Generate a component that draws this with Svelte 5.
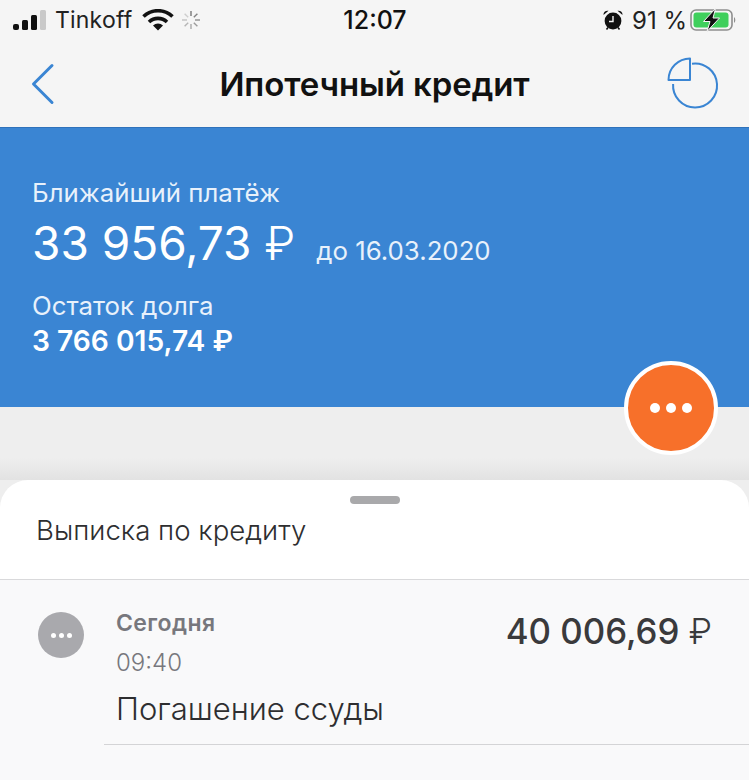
<script>
	const rays = [0, 45, 90, 135, 180, 225, 270, 315];
</script>

<div class="screen">
	<header class="top">
		<div class="status">
			<div class="status-left">
				<svg class="signal" width="34" height="21" viewBox="0 0 34 21">
					<rect x="0" y="14" width="6" height="6" rx="2" fill="#111" />
					<rect x="9" y="10" width="6" height="10" rx="1.5" fill="#111" />
					<rect x="18" y="5" width="6" height="15" rx="1.5" fill="#111" />
					<rect x="27" y="0" width="6" height="20" rx="1.5" fill="#c9c9c9" />
				</svg>
				<span class="carrier">Tinkoff</span>
				<svg class="wifi" width="32" height="22" viewBox="0 0 32 22">
					<path d="M1.5 7.5 A21 21 0 0 1 30.5 7.5" fill="none" stroke="#111" stroke-width="3.6" />
					<path d="M7 13 A13 13 0 0 1 25 13" fill="none" stroke="#111" stroke-width="3.6" />
					<path d="M11 16.4 A7.5 7.5 0 0 1 21 16.4 L16 21.5 Z" fill="#111" />
				</svg>
				<svg class="spinner" width="20" height="20" viewBox="0 0 20 20">
					{#each rays as r, i}
						<line x1="10" y1="1" x2="10" y2="6" stroke="#777" stroke-width="1.4" opacity={1 - i * 0.1} transform="rotate({r} 10 10)" />
					{/each}
				</svg>
			</div>
			<div class="time">12:07</div>
			<div class="status-right">
				<svg class="alarm" width="22" height="22" viewBox="0 0 22 22">
					<circle cx="11" cy="12" r="8.4" fill="#111" />
					<path d="M11 7 V12.5 H7" fill="none" stroke="#f5f5f5" stroke-width="1.4" />
					<path d="M1.5 6 A4 4 0 0 1 6.5 1.8 Z M20.5 6 A4 4 0 0 0 15.5 1.8 Z" fill="#111" />
					<path d="M4.5 20.5 L6 18.5 M17.5 20.5 L16 18.5" stroke="#111" stroke-width="1.6" />
				</svg>
				<span class="percent">91 %</span>
				<svg class="battery" width="49" height="24" viewBox="0 0 49 24">
					<rect x="3" y="2" width="41" height="20" rx="5" fill="none" stroke="#8e8e8e" stroke-width="1.6" />
					<rect x="5.5" y="4.5" width="35" height="15" rx="3" fill="#3fcf5c" />
					<path d="M46 9 A4 4 0 0 1 46 15 Z" fill="#8e8e8e" />
					<path d="M27.5 0.5 L15.5 13.5 H22 L19 23.5 L31.5 10 H25 Z" fill="#111" stroke="#f5f5f5" stroke-width="1" />
				</svg>
			</div>
		</div>
		<nav class="nav">
			<svg class="back" width="26" height="42" viewBox="0 0 26 42">
				<path d="M22 2.5 L3.5 21 L22 39.5" fill="none" stroke="#3a85d3" stroke-width="3" stroke-linecap="round" stroke-linejoin="round" />
			</svg>
			<h1>Ипотечный кредит</h1>
			<svg class="chart" width="52" height="52" viewBox="0 0 52 52">
				<path d="M25 6.7 A22 22 0 1 1 6.1 27" fill="none" stroke="#3a85d3" stroke-width="2" />
				<path d="M23 1.5 V23 H1.5 A21.5 21.5 0 0 1 23 1.5 Z" fill="none" stroke="#3a85d3" stroke-width="2" stroke-linejoin="round" />
			</svg>
		</nav>
	</header>

	<section class="hero">
		<div class="label">Ближайший платёж</div>
		<div class="payment">
			<span class="amount">33 956,73 <span class="rub">₽</span></span>
			<span class="due">до 16.03.2020</span>
		</div>
		<div class="label debt-label">Остаток долга</div>
		<div class="debt">3 766 015,74 ₽</div>
		<button class="fab" aria-label="Ещё">
			<i></i><i></i><i></i>
		</button>
	</section>

	<div class="gap"></div>

	<section class="sheet">
		<div class="handle"></div>
		<h2>Выписка по кредиту</h2>
		<div class="row">
			<div class="row-icon"><i></i><i></i><i></i></div>
			<div class="row-body">
				<div class="row-main">
					<div>
						<div class="date">Сегодня</div>
						<div class="clock">09:40</div>
					</div>
					<div class="sum">40 006,69 <span class="rub">₽</span></div>
				</div>
				<div class="title">Погашение ссуды</div>
			</div>
		</div>
	</section>
</div>

<style>
	:global(body) {
		margin: 0;
		background: #f9f9fa;
	}

	.screen {
		width: 749px;
		height: 780px;
		overflow: hidden;
		display: flex;
		flex-direction: column;
		font-family: Inter, "Liberation Sans", sans-serif;
		background: #eeeeee;
	}

	.top {
		height: 127px;
		flex: none;
		background: #f5f5f5;
	}

	.status {
		height: 40px;
		padding: 0 12px 0 13px;
		display: grid;
		grid-template-columns: 1fr auto 1fr;
		align-items: center;
		color: #111;
	}

	.status-left {
		display: flex;
		align-items: center;
	}

	.signal {
		margin-right: 8px;
	}

	.carrier {
		font-size: 23px;
		letter-spacing: 0.2px;
		color: #222;
	}

	.wifi {
		margin-left: 10px;
	}

	.spinner {
		margin-left: 7px;
	}

	.time {
		font-size: 25px;
		font-weight: 500;
	}

	.status-right {
		display: flex;
		align-items: center;
		justify-content: flex-end;
	}

	.percent {
		font-size: 24px;
		margin: 0 1px 0 8px;
		color: #222;
	}

	.nav {
		height: 87px;
		padding: 0 30px;
		display: grid;
		grid-template-columns: 1fr auto 1fr;
		align-items: center;
	}

	.nav h1 {
		margin: 0;
		font-size: 33px;
		font-weight: 600;
		color: #111;
		letter-spacing: -0.1px;
	}

	.back {
		margin-top: 1px;
	}

	.chart {
		margin-top: -2px;
		justify-self: end;
	}

	.hero {
		position: relative;
		height: 280px;
		flex: none;
		box-sizing: border-box;
		padding: 50px 32px 0 32px;
		background: #3a85d3;
		border-top: 1px solid #2f72bb;
		color: #fff;
	}

	.label {
		font-size: 25.8px;
		line-height: 30px;
		color: #e8f1fb;
	}

	.payment {
		display: flex;
		align-items: baseline;
		margin-top: 7px;
	}

	.amount {
		font-size: 46px;
		line-height: 56px;
	}

	.rub {
		font-weight: 300;
	}

	.due {
		margin-left: 21px;
		font-size: 25.8px;
		color: #e8f1fb;
	}

	.debt-label {
		margin-top: 20px;
	}

	.debt {
		margin-top: 2px;
		font-size: 28.2px;
		line-height: 36px;
		font-weight: 600;
	}

	.fab {
		position: absolute;
		right: 31px;
		top: 233px;
		width: 94px;
		height: 94px;
		padding: 0;
		box-sizing: border-box;
		border: 4px solid #fff;
		border-radius: 50%;
		background: #f7702a;
		display: flex;
		align-items: center;
		justify-content: center;
		gap: 6px;
	}

	.fab i {
		width: 10px;
		height: 10px;
		border-radius: 50%;
		background: #fff;
	}

	.gap {
		height: 73px;
		flex: none;
		background: linear-gradient(#eeeeee 70%, #e2e2e2);
	}

	.sheet {
		flex: 1;
		position: relative;
		background: #fff;
		border-radius: 28px 28px 0 0;
	}

	.handle {
		position: absolute;
		top: 16px;
		left: 350px;
		width: 50px;
		height: 8px;
		border-radius: 4px;
		background: #a9a9ab;
	}

	.sheet h2 {
		margin: 0;
		height: 100px;
		box-sizing: border-box;
		padding: 33px 0 0 36px;
		font-size: 27.6px;
		line-height: 34px;
		font-weight: 300;
		color: #2e2e30;
		border-bottom: 1px solid #d9d9db;
	}

	.row {
		display: flex;
		height: 201px;
		background: #f9f9fa;
		padding-left: 38px;
	}

	.row-icon {
		margin-top: 32px;
		width: 46px;
		height: 46px;
		flex: none;
		border-radius: 50%;
		background: #a9a9ad;
		display: flex;
		align-items: center;
		justify-content: center;
		gap: 3px;
	}

	.row-icon i {
		width: 5px;
		height: 5px;
		border-radius: 50%;
		background: #fff;
	}

	.row-body {
		flex: 1;
		margin-left: 20px;
		height: 165px;
		box-sizing: border-box;
		padding: 29px 37px 0 12px;
		border-bottom: 1px solid #d4d4d6;
		align-self: flex-start;
	}

	.row-main {
		display: flex;
		justify-content: space-between;
	}

	.date {
		font-size: 23px;
		line-height: 28px;
		font-weight: 600;
		letter-spacing: 0.4px;
		color: #77777d;
	}

	.clock {
		margin-top: 13px;
		font-size: 24px;
		line-height: 26px;
		font-weight: 300;
		color: #77777d;
	}

	.sum {
		margin-top: -1px;
		font-size: 34.8px;
		line-height: 46px;
		font-weight: 500;
		color: #3a3a3c;
	}

	.title {
		margin-top: 15px;
		font-size: 31px;
		line-height: 36px;
		font-weight: 300;
		color: #2e2e30;
	}
</style>
